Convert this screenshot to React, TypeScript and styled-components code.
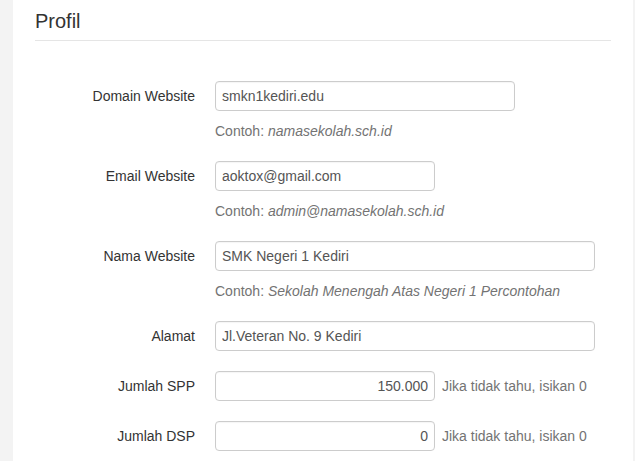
import React from "react";
import styled, { createGlobalStyle } from "styled-components";

const Global = createGlobalStyle`
  html, body { margin: 0; padding: 0; background: #f3f3f3; }
  body { font-family: "Liberation Sans", Arial, sans-serif; font-size: 14px; color: #333; }
`;

const Page = styled.div`
  display: flex;
  padding: 0 2px 0 13px;
  min-height: 461px;
  box-sizing: border-box;
`;

const Panel = styled.div`
  flex: 1;
  background: #fff;
  padding: 10px 22px 0 22px;
  min-height: 461px;
  box-sizing: border-box;
`;

const Title = styled.h3`
  margin: 0;
  font-size: 20px;
  font-weight: 400;
  line-height: 22px;
  color: #333;
  padding-bottom: 8px;
  border-bottom: 1px solid #e5e5e5;
`;

const Form = styled.div`
  display: flex;
  flex-direction: column;
  gap: 20px;
  padding-top: 40px;
`;

const Row = styled.div`
  display: grid;
  grid-template-columns: 160px 1fr;
  column-gap: 20px;
  align-items: start;
`;

const Label = styled.label`
  text-align: right;
  line-height: 30px;
  height: 30px;
  color: #333;
`;

const Field = styled.div`
  display: flex;
  flex-direction: column;
`;

const Line = styled.div`
  display: flex;
  align-items: center;
  gap: 7px;
`;

const Input = styled.input<{ $w: number; $right?: boolean }>`
  width: ${(p) => p.$w}px;
  height: 30px;
  box-sizing: border-box;
  border: 1px solid #ccc;
  border-radius: 4px;
  padding: 0 6px;
  font-family: "Liberation Sans", Arial, sans-serif;
  font-size: 14px;
  color: #555;
  background: #fff;
  text-align: ${(p) => (p.$right ? "right" : "left")};
  box-shadow: inset 0 1px 1px rgba(0, 0, 0, 0.04);
  outline: none;
`;

const Help = styled.div`
  margin-top: 10px;
  line-height: 20px;
  color: #737373;
  em { font-style: italic; }
`;

const Side = styled.span`
  color: #737373;
  line-height: 30px;
`;

type F = { label: string; value: string; w: number; hint?: string; right?: boolean; side?: string };

const fields: F[] = [
  { label: "Domain Website", value: "smkn1kediri.edu", w: 300, hint: "namasekolah.sch.id" },
  { label: "Email Website", value: "aoktox@gmail.com", w: 220, hint: "admin@namasekolah.sch.id" },
  { label: "Nama Website", value: "SMK Negeri 1 Kediri", w: 380, hint: "Sekolah Menengah Atas Negeri 1 Percontohan" },
  { label: "Alamat", value: "Jl.Veteran No. 9 Kediri", w: 380 },
  { label: "Jumlah SPP", value: "150.000", w: 220, right: true, side: "Jika tidak tahu, isikan 0" },
  { label: "Jumlah DSP", value: "0", w: 220, right: true, side: "Jika tidak tahu, isikan 0" },
];

export default function App() {
  return (
    <>
      <Global />
      <Page>
        <Panel>
          <Title>Profil</Title>
          <Form>
            {fields.map((f) => (
              <Row key={f.label}>
                <Label>{f.label}</Label>
                <Field>
                  <Line>
                    <Input $w={f.w} $right={f.right} defaultValue={f.value} />
                    {f.side && <Side>{f.side}</Side>}
                  </Line>
                  {f.hint && (
                    <Help>
                      Contoh: <em>{f.hint}</em>
                    </Help>
                  )}
                </Field>
              </Row>
            ))}
          </Form>
        </Panel>
      </Page>
    </>
  );
}
